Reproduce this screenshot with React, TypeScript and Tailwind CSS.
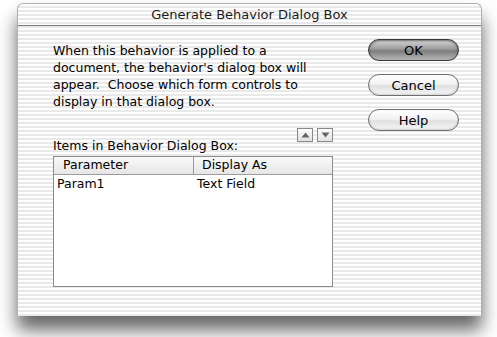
import React from "react";

const stripes =
  "bg-[repeating-linear-gradient(to_bottom,#ffffff_0px,#ffffff_2px,#e9e9e9_2px,#e9e9e9_4px)]";

const AquaButton: React.FC<{ label: string; primary?: boolean }> = ({ label, primary }) => (
  <div
    className={
      "w-[91px] h-[22px] rounded-full border flex items-center justify-center text-[13px] leading-none text-black " +
      (primary
        ? "border-[#3a3a3a] bg-[linear-gradient(to_bottom,#d8d8d8_0%,#9a9a9a_45%,#7c7c7c_55%,#b8b8b8_100%)] shadow-[inset_0_1px_2px_rgba(0,0,0,0.5)]"
        : "border-[#6e6e6e] bg-[linear-gradient(to_bottom,#ffffff_0%,#f2f2f2_45%,#e0e0e0_55%,#f7f7f7_100%)] shadow-[inset_0_-1px_2px_rgba(0,0,0,0.15)]")
    }
  >
    {label}
  </div>
);

const ArrowButton: React.FC<{ up?: boolean }> = ({ up }) => (
  <div className="w-[16px] h-[14px] border border-[#8a8a8a] bg-[linear-gradient(to_bottom,#fdfdfd,#e2e2e2)] flex items-center justify-center">
    <svg width="9" height="6" viewBox="0 0 9 6">
      {up ? <path d="M4.5 0.5 L8.5 5.5 L0.5 5.5 Z" fill="#666" /> : <path d="M0.5 0.5 L8.5 0.5 L4.5 5.5 Z" fill="#666" />}
    </svg>
  </div>
);

export default function App() {
  return (
    <div
      className="w-[497px] h-[337px] bg-white overflow-hidden pt-[3px] pl-[17px]"
      style={{ fontFamily: "'DejaVu Sans', 'Liberation Sans', sans-serif" }}
    >
      <div className={"w-[465px] h-[313px] rounded-t-[6px] flex flex-col border-x border-t border-[#b0b0b0] shadow-[0_14px_18px_rgba(0,0,0,0.6)] " + stripes}>
        {/* Title bar */}
        <div className="h-[22px] border-b border-[#7a7a7a] flex items-center justify-center text-[13px] text-[#1a1a1a] pt-[1px]">
          Generate Behavior Dialog Box
        </div>

        {/* Body */}
        <div className="flex flex-1 pt-[13px]">
          {/* Left column */}
          <div className="pl-[35px] w-[316px] flex flex-col">
            <p className="text-[12.5px] leading-[17px] text-black pt-[3px] whitespace-nowrap">
              When this behavior is applied to a<br />
              document, the behavior's dialog box will<br />
              appear.&nbsp; Choose which form controls to<br />
              display in that dialog box.
            </p>

            <div className="flex justify-end gap-[4px] mt-[18px] mr-[1px]">
              <ArrowButton up />
              <ArrowButton />
            </div>

            <div className="text-[12.5px] leading-[14px] text-black mt-[-3px]">Items in Behavior Dialog Box:</div>

            <div className="mt-[3px] w-[280px] h-[131px] border border-[#8c8c8c] bg-white flex flex-col">
              <div className="h-[18px] flex border-b border-[#9c9c9c] bg-[linear-gradient(to_bottom,#fafafa,#e6e6e6)] text-[12.5px] text-black">
                <div className="w-[140px] pl-[9px] flex items-center border-r border-[#9c9c9c]">Parameter</div>
                <div className="flex-1 pl-[8px] flex items-center">Display As</div>
              </div>
              <div className="h-[18px] flex text-[12.5px] text-black">
                <div className="w-[143px] pl-[3px] flex items-center">Param1</div>
                <div className="flex-1 flex items-center">Text Field</div>
              </div>
            </div>
          </div>

          {/* Buttons */}
          <div className="ml-[34px] flex flex-col gap-[13px]">
            <AquaButton label="OK" primary />
            <AquaButton label="Cancel" />
            <AquaButton label="Help" />
          </div>
        </div>
      </div>
    </div>
  );
}
